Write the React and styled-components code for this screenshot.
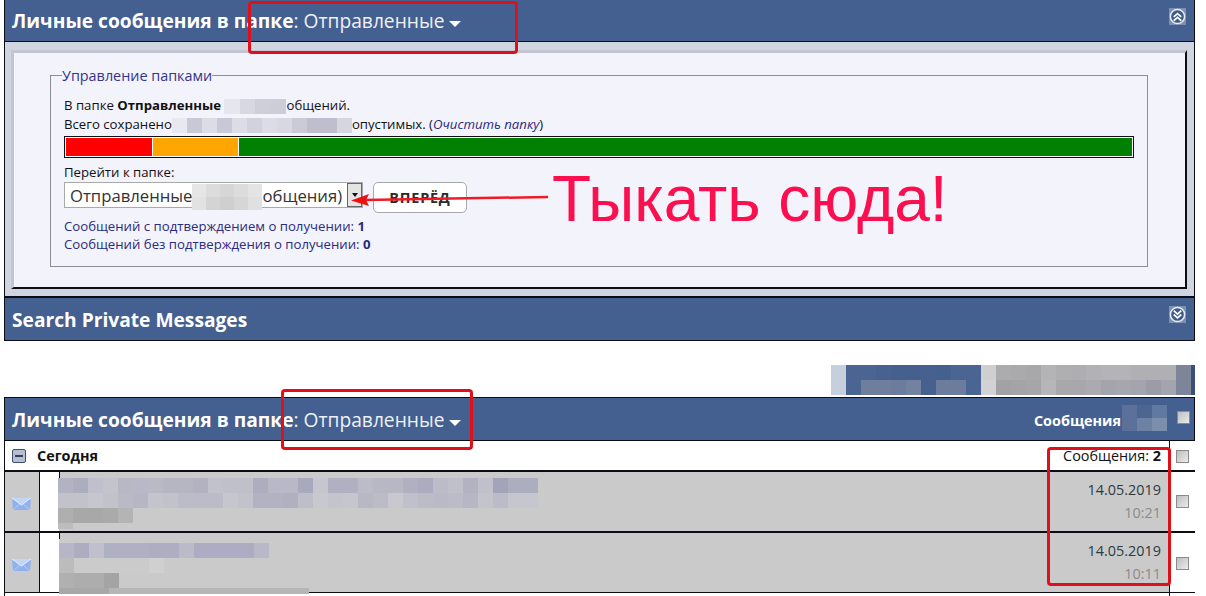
import React from 'react'
import styled, { createGlobalStyle } from 'styled-components'

const GlobalStyle = createGlobalStyle`
  html, body {
    margin: 0;
    background: #fff;
  }
  * { box-sizing: border-box; }
`

const Root = styled.div`
  position: relative;
  width: 1206px;
  height: 596px;
  overflow: hidden;
  padding-left: 4px;
  font-family: "Open Sans", "Noto Sans", sans-serif;
  font-size: 13.2px;
  color: #111;
`

const Page = styled.div`
  width: 1191px;
  display: flex;
  flex-direction: column;
`

const Header = styled.div`
  height: ${({ $h }) => $h}px;
  background: #436090;
  border: 1px solid #0c0c14;
  border-top: ${({ $noTop }) => ($noTop ? 'none' : '1px solid #0c0c14')};
  display: flex;
  justify-content: space-between;
  padding: 0 8px 0 7px;
  color: #fff;
`

const HeaderTitle = styled.div`
  font-size: 19.2px;
  font-weight: 700;
  line-height: 26px;
  padding-top: ${({ $top }) => $top}px;
  white-space: nowrap;
`

const FolderName = styled.span`
  font-weight: 400;
  color: #eef1f6;
`

const Caret = styled.span`
  display: inline-block;
  margin-left: 5px;
  border-left: 6px solid transparent;
  border-right: 6px solid transparent;
  border-top: 6px solid #fff;
  vertical-align: 1px;
`

const HeaderIcon = styled.svg`
  width: 17px;
  height: 17px;
  margin: 8px 0 0;
`

const Panel = styled.div`
  height: 256px;
  background: #d1d5e0;
  border-left: 1px solid #0c0c14;
  border-right: 1px solid #0c0c14;
  border-bottom: 2px solid #0c0c14;
  padding: 8px 7px 0 6px;
`

const InnerPanel = styled.div`
  height: 239px;
  background: #f3f3fc;
  border-top: 3px solid #c3c6d2;
  border-left: 3px solid #c3c6d2;
  border-right: 2px solid #0c0c14;
  border-bottom: 2px solid #0c0c14;
  padding: 14px 37px 0 36px;
`

const FolderBox = styled.fieldset`
  margin: 0;
  height: 200px;
  border: 1px solid #8d8d96;
  padding: 12px 13px 0;
`

const BoxLegend = styled.legend`
  padding: 0;
  margin-left: -2px;
  font-size: 14.4px;
  line-height: 17px;
  color: #34348a;
`

const InfoLine = styled.div`
  line-height: 19px;
  white-space: nowrap;
`

const ClearLink = styled.a`
  color: #2a2a80;
  font-style: italic;
`

const Usage = styled.div`
  height: 22px;
  margin-top: 2px;
  border: 1px solid #111;
  padding: 1px;
  display: flex;
  gap: 1px;
  background: #fff;
`

const UsagePart = styled.div`
  background: ${({ $color }) => $color};
  flex: ${({ $w }) => ($w ? `0 0 ${$w}px` : '1 1 auto')};
`

const JumpLabel = styled.div`
  margin-top: 6px;
  line-height: 17px;
`

const JumpRow = styled.div`
  display: flex;
  align-items: flex-start;
  gap: 10px;
  margin-top: 1px;
`

const FakeSelect = styled.div`
  width: 299px;
  height: 26px;
  background: #fff;
  border: 1px solid #a9a9a9;
  display: flex;
  align-items: center;
  justify-content: space-between;
  font-size: 16.7px;
  padding-left: 5px;
  color: #333;
`

const SelectText = styled.span`
  white-space: nowrap;
`

const SelectArrow = styled.span`
  width: 15px;
  height: 24px;
  background: #e4e4e4;
  border: 1px solid #666;
  display: flex;
  align-items: center;
  justify-content: center;
  &::after {
    content: "";
    border-left: 3px solid transparent;
    border-right: 3px solid transparent;
    border-top: 4px solid #111;
  }
`

const GoButton = styled.div`
  width: 94px;
  height: 31px;
  border: 1px solid #a8a8ac;
  border-radius: 5px;
  background: #fff;
  font-size: 14.4px;
  font-weight: 700;
  letter-spacing: 0.8px;
  color: #2a2a2a;
  display: flex;
  align-items: center;
  justify-content: center;
`

const ReceiptLine = styled.div`
  color: #2a2a80;
  line-height: 18px;
  margin-top: ${({ $top }) => $top || 0}px;
`

const Paging = styled.div`
  display: flex;
  justify-content: flex-end;
  margin-top: 24px;
  height: 32px;
`

const PagingEnd = styled.div`
  width: 4px;
  height: 30px;
  background: #3a4f78;
`

const HeaderRight = styled.div`
  display: flex;
  align-items: flex-start;
  font-size: 14.4px;
  font-weight: 700;
  line-height: 17px;
  height: 100%;
  padding-top: 14px;
  margin-right: -4px;
`

const Row = styled.div`
  display: flex;
  height: ${({ $h }) => $h}px;
  border-left: 1px solid #0c0c14;
  border-bottom: ${({ $line }) => $line}px solid #0c0c14;
`

const GroupMain = styled.div`
  flex: 1;
  display: flex;
  align-items: center;
  justify-content: space-between;
  padding: 0 8px 0 7px;
  font-size: 14.4px;
`

const GroupName = styled.div`
  display: flex;
  align-items: center;
  gap: 11px;
  font-weight: 700;
`

const CollapseIcon = styled.span`
  width: 14px;
  height: 14px;
  border: 1px solid #44506a;
  border-radius: 2px;
  background: #b4bfd4;
  display: flex;
  align-items: center;
  justify-content: center;
  &::after {
    content: "";
    width: 8px;
    height: 2px;
    background: #3a3f50;
  }
`

const Filler = styled.div`
  flex: 1;
`

const CheckCell = styled.div`
  width: 26px;
  flex: none;
  border-left: 1px solid #0c0c14;
  padding: ${({ $top }) => $top}px 0 0 6px;
  background: #fff;
`

const CheckBox = styled.span`
  display: block;
  flex: none;
  width: 13px;
  height: 13px;
  margin-top: ${({ $top }) => $top || 0}px;
  border: 1px solid #8a8a8a;
  background: linear-gradient(135deg, #bdbdbd, #ececec);
`

const IconCell = styled.div`
  width: 35px;
  flex: none;
  background: #cacaca;
  border-right: 1px solid #0c0c14;
  display: flex;
  align-items: center;
  padding: 4px 0 0 6px;
`

const Spacer = styled.div`
  width: 19px;
  flex: none;
  background: #fff;
`

const Subject = styled.div`
  position: relative;
  flex: 1;
  min-width: 0;
  background: #cacaca;
  padding-top: ${({ $top }) => $top}px;
  &::before {
    content: "";
    position: absolute;
    left: 0;
    top: 0;
    width: 1px;
    height: 6px;
    background: #0c0c14;
  }
`

const DateCell = styled.div`
  width: 130px;
  flex: none;
  background: #cacaca;
  text-align: right;
  padding: 8px 8px 0 0;
`

const DateText = styled.div`
  font-size: 14.4px;
  line-height: 20px;
  color: #2c3a44;
`

const TimeText = styled.div`
  font-size: 14.4px;
  line-height: 20px;
  margin-top: 3px;
  color: #8a8a8a;
`

const Grid = styled.span`
  display: ${({ $block }) => ($block ? 'grid' : 'inline-grid')};
  width: fit-content;
  flex: none;
  grid-auto-rows: ${({ $h }) => $h || 15}px;
  grid-template-columns: repeat(${({ $cols }) => $cols}, ${({ $size }) => $size || 15}px);
  vertical-align: middle;
  margin: ${({ $m }) => $m || '0'};
`

const Pixel = styled.span`
  background: ${({ $c }) => $c};
`

const Marker = styled.div`
  position: absolute;
  left: ${({ $x }) => $x}px;
  top: ${({ $y }) => $y}px;
  width: ${({ $w }) => $w}px;
  height: ${({ $h }) => $h}px;
  border: 3px solid #e0101a;
  border-radius: 4px;
`

const Shout = styled.div`
  position: absolute;
  left: 552px;
  top: 160px;
  font-family: "Liberation Sans", Arial, sans-serif;
  font-size: 64px;
  line-height: 78px;
  color: #fb0f4f;
  white-space: nowrap;
`

const ArrowSvg = styled.svg`
  position: absolute;
  left: 345px;
  top: 185px;
`

function Mosaic({ rows, ...rest }) {
  return (
    <Grid $cols={rows[0].length} {...rest}>
      {rows.flat().map((c, i) => <Pixel key={i} $c={c} />)}
    </Grid>
  )
}

function RoundChevrons({ up }) {
  const d = up
    ? ['M5 9.5 9 6l4 3.5', 'M5 13.5 9 10l4 3.5']
    : ['M5 5 9 8.5 13 5', 'M5 9 9 12.5 13 9']
  return (
    <HeaderIcon viewBox="0 0 18 18">
      <rect width="18" height="18" fill="#7d90b2" />
      <circle cx="9" cy="9" r="7.5" fill="#3f5a88" stroke="#e6eaf2" strokeWidth="1.6" />
      {d.map(p => <path key={p} d={p} fill="none" stroke="#fff" strokeWidth="1.8" />)}
    </HeaderIcon>
  )
}

function Envelope() {
  return (
    <svg width="21" height="14" viewBox="0 0 21 14">
      <path d="M1 1h19l-1 12H2z" fill="#8fb1ee" />
      <path d="M1 1l9.5 7L20 1" fill="#c4d6f8" stroke="#e4edfd" />
      <path d="M2 13l7-6M19 13l-7-6" stroke="#b6cbf4" fill="none" />
    </svg>
  )
}

const pagingRows = [
  ['#c6cfdc', '#4b6592', '#4b6592', '#48628f', '#46608e', '#45608e', '#46618e', '#44608e', '#4a6592', '#4a6592', '#cfcfd2', '#acacae', '#aaaaac', '#a8a8aa', '#b4b4b6', '#afafb2', '#aeaeb2', '#b2b2b6', '#b4b4b8', '#b4b4b8', '#b0b0b4', '#b0b0b4', '#b0b0b4', '#7d8599'],
  ['#c6cfdc', '#4b6592', '#6e7e9c', '#6e7e9c', '#6c7c9c', '#73829e', '#46618e', '#6c7c9c', '#6c7c9c', '#4a6592', '#d2d2d4', '#a2a2a4', '#a4a4a6', '#a6a6a8', '#b6b6b8', '#a8a8aa', '#a8a8ac', '#aaaab0', '#a4a4ac', '#a6a6ae', '#a4a4ae', '#9c9ca8', '#a4a4ae', '#7d8599'],
]

const subjectOne = [
  ['#b2b2c2', '#adadc0', '#c0c0cc', '#c4c4cc', '#b8b8c4', '#b8b8c6', '#babac6', '#b6b6c2', '#b6b6c2', '#b2b2c0', '#c2c2cc', '#c0c0ca', '#c0c0ca', '#adadc0', '#b8b8c6', '#b8b8c6', '#a9a9be', '#c6c6ce', '#b0b0c2', '#b0b0c2', '#bcbcc8', '#b8b8c4', '#b8b8c4', '#b0b0c0', '#acacc0', '#bcbcc8', '#c0c0ca', '#b2b2c2', '#c0c0cc', '#a3a3ba', '#adadc0', '#adadc0'],
  ['#c2c2ca', '#c2c2ca', '#c6c6ce', '#c2c2ca', '#babac6', '#b6b6c4', '#c4c4cc', '#c2c2ca', '#bcbcc8', '#bcbcc8', '#bcbcc8', '#c6c6ce', '#c2c2ca', '#b2b2c2', '#b2b2c2', '#b0b0c0', '#bebec8', '#c8c8ce', '#c4c4cc', '#c6c6ce', '#b8b8c4', '#bcbcc6', '#c8c8ce', '#c0c0ca', '#bcbcc6', '#babac6', '#bcbcc8', '#b6b6c4', '#c4c4cc', '#bcbcc8', '#c6c6ce', '#c6c6ce'],
]
const subjectOneB = [['#afafaf', '#a8a8a8', '#a8a8a8', '#aaaaaa', '#b4b4b4']]
const subjectTwo = [
  ['#b6b6c8', '#adadc2', '#c0c0cc', '#b0b0c4', '#b0b0c4', '#b0b0c4', '#aeaec2', '#aeaec2', '#babac8', '#acacc2', '#acacc2', '#acacc2', '#acacc2', '#b8b8c8'],
]
const subjectTwoB = [['#bcbcbc', '#cbcbcb', '#cbcbcb', '#cbcbcb', '#cbcbcb', '#cbcbcb', '#d0d0d0']]
const subjectTwoC = [['#b0b0b0', '#adadad', '#adadad', '#a4a4a4']]
const subjectTwoD = [['#a8a8a8', '#b6b6b6', '#b6b6b6', '#b6b6b6', '#b6b6b6']]

export default function App() {
  return (
    <Root>
      <GlobalStyle />
      <Page>
        <Header $h={42} $noTop>
          <HeaderTitle $top={8}>
            Личные сообщения в папке<FolderName>: Отправленные</FolderName><Caret />
          </HeaderTitle>
          <RoundChevrons up />
        </Header>
        <Panel>
          <InnerPanel>
            <FolderBox>
              <BoxLegend>Управление папками</BoxLegend>
              <InfoLine>
                В папке <b>Отправленные</b>{' '}
                <Mosaic $size={15.5} rows={[['#e6e6ee', '#d8d8e2', '#cfcfda', '#cdcdd8']]} />общений.
              </InfoLine>
              <InfoLine>
                Всего сохранено<Mosaic rows={[['#e8e8f0', '#c8c8d6', '#dcdce6', '#c8c8d6', '#dcdce6', '#d2d2de', '#dcdce6', '#d8d8e2', '#cbcbd8', '#bebece', '#bebece', '#d6d6e0']]} />опустимых. (<ClearLink>Очистить папку</ClearLink>)
              </InfoLine>
              <Usage>
                <UsagePart $color="#f00" $w={86} />
                <UsagePart $color="#ffa500" $w={85} />
                <UsagePart $color="#008000" />
              </Usage>
              <JumpLabel>Перейти к папке:</JumpLabel>
              <JumpRow>
                <FakeSelect>
                  <SelectText>
                    Отправленные
                    <Mosaic $size={14} $h={13} $m="-4px 0" rows={[
                      ['#e6e6e6', '#dcdcdc', '#d6d6d6', '#dcdcdc', '#e4e4e4'],
                      ['#e2e2e2', '#d4d4d4', '#cfcfcf', '#d6d6d6', '#e0e0e0'],
                    ]} />общения)
                  </SelectText>
                  <SelectArrow />
                </FakeSelect>
                <GoButton>ВПЕРЁД</GoButton>
              </JumpRow>
              <ReceiptLine $top={4}>Сообщений с подтверждением о получении: <b>1</b></ReceiptLine>
              <ReceiptLine>Сообщений без подтверждения о получении: <b>0</b></ReceiptLine>
            </FolderBox>
          </InnerPanel>
        </Panel>
        <Header $h={43} $noTop>
          <HeaderTitle $top={9}>Search Private Messages</HeaderTitle>
          <RoundChevrons />
        </Header>
        <Paging>
          <Mosaic rows={pagingRows} />
          <PagingEnd />
        </Paging>
        <Header $h={44}>
          <HeaderTitle $top={9}>
            Личные сообщения в папке<FolderName>: Отправленные</FolderName><Caret />
          </HeaderTitle>
          <HeaderRight>
            Сообщения
            <Mosaic $h={13} $m="-7px 10px 0 1px" rows={[
              ['#5b7199', '#4d6691', '#6079a0'],
              ['#5b7199', '#6c81a3', '#7b8fad'],
            ]} />
            <CheckBox $top={-1} />
          </HeaderRight>
        </Header>
        <Row $h={31} $line={2}>
          <GroupMain>
            <GroupName><CollapseIcon />Сегодня</GroupName>
            <span>Сообщения: <b>2</b></span>
          </GroupMain>
          <CheckCell $top={9}><CheckBox /></CheckCell>
        </Row>
        <Row $h={61} $line={2}>
          <IconCell><Envelope /></IconCell>
          <Spacer />
          <Subject $top={6}>
            <Mosaic $block $m="0 0 0 -1px" rows={subjectOne} />
            <Mosaic $block $m="0 0 0 -1px" rows={subjectOneB} />
            <Mosaic $block $h={6} $m="0 0 0 -1px" rows={[['#bdbdbd']]} />
          </Subject>
          <DateCell>
            <DateText>14.05.2019</DateText>
            <TimeText>10:21</TimeText>
          </DateCell>
          <CheckCell $top={23}><CheckBox /></CheckCell>
        </Row>
        <Row $h={60} $line={1}>
          <IconCell><Envelope /></IconCell>
          <Spacer />
          <Subject $top={10}>
            <Mosaic $block rows={subjectTwo} />
            <Mosaic $block rows={subjectTwoB} />
            <Mosaic $block rows={subjectTwoC} />
            <Mosaic $block $size={50} $h={6} rows={subjectTwoD} />
          </Subject>
          <DateCell>
            <DateText>14.05.2019</DateText>
            <TimeText>10:11</TimeText>
          </DateCell>
          <CheckCell $top={24}><CheckBox /></CheckCell>
        </Row>
        <Row $h={6} $line={0}>
          <Filler />
          <CheckCell $top={0} />
        </Row>
      </Page>

      <Marker $x={248} $y={1} $w={270} $h={53} />
      <Marker $x={281} $y={389} $w={192} $h={61} />
      <Marker $x={1047} $y={447} $w={124} $h={139} />
      <Shout>Тыкать сюда!</Shout>
      <ArrowSvg width="205" height="30" viewBox="0 0 205 30">
        <path d="M203 12 20 15" stroke="#ee1c25" strokeWidth="2.5" fill="none" />
        <path d="M6 15.5 24 9 21 15 24 21z" fill="#ee1010" />
      </ArrowSvg>
    </Root>
  )
}
